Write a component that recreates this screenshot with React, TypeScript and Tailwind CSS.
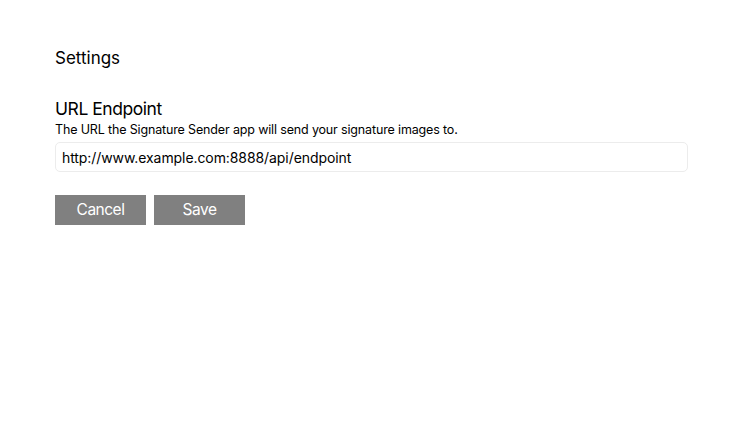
export default function App() {
  return (
    <div className="min-h-[422px] w-full bg-white font-['Inter',sans-serif] text-black">
      <div className="px-[55px] pt-[48px]">
        <h1 className="text-[17px] leading-[20px]">Settings</h1>
        <div className="mt-[30px]">
          <h2 className="text-[17.5px] leading-[22px] tracking-[-0.45px]">URL Endpoint</h2>
          <p className="mt-[2px] text-[12.5px] leading-[16px] tracking-[-0.15px]">
            The URL the Signature Sender app will send your signature images to.
          </p>
          <input
            type="text"
            defaultValue="http://www.example.com:8888/api/endpoint"
            className="mt-[4px] block h-[30px] w-[633px] rounded-[5px] border border-[#ececec] px-[6px] text-[14px] tracking-[-0.08px] outline-none"
          />
        </div>
        <div className="mt-[23px] flex gap-[8px]">
          <button className="h-[30px] w-[91px] bg-[#808080] text-[15.5px] tracking-[-0.5px] text-white">Cancel</button>
          <button className="h-[30px] w-[91px] bg-[#808080] text-[15.5px] tracking-[-0.5px] text-white">Save</button>
        </div>
      </div>
    </div>
  );
}
